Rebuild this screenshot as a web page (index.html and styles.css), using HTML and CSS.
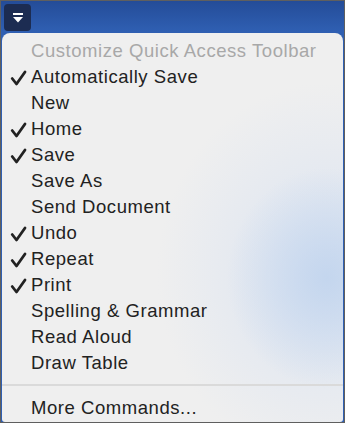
FILE: index.html
```html
<!DOCTYPE html>
<html lang="en">

<head>
    <meta charset="UTF-8">
    <meta name="viewport" content="width=device-width, initial-scale=1.0">
    <title>Quick Access Toolbar</title>
    <link rel="stylesheet" href="styles.css">
</head>

<body>
    <div class="window">
        <div class="toolbar">
            <div class="qat-button">
                <svg width="12" height="12" viewBox="0 0 12 12">
                    <rect x="1" y="1" width="10" height="2" fill="#fff" />
                    <polygon points="1,5 11,5 6,10.5" fill="#fff" />
                </svg>
            </div>
        </div>

        <div class="menu">
            <div class="menu-item header">Customize Quick Access Toolbar</div>
            <div class="menu-item checked">Automatically Save</div>
            <div class="menu-item">New</div>
            <div class="menu-item checked">Home</div>
            <div class="menu-item checked">Save</div>
            <div class="menu-item">Save As</div>
            <div class="menu-item">Send Document</div>
            <div class="menu-item checked">Undo</div>
            <div class="menu-item checked">Repeat</div>
            <div class="menu-item checked">Print</div>
            <div class="menu-item">Spelling &amp; Grammar</div>
            <div class="menu-item">Read Aloud</div>
            <div class="menu-item">Draw Table</div>
            <div class="separator"></div>
            <div class="menu-item">More Commands...</div>
        </div>
    </div>
</body>

</html>
```

FILE: styles.css
```css
body {
    margin: 0;
    font-family: 'Liberation Sans', Arial, sans-serif;
}

.window {
    width: 345px;
    height: 423px;
    box-sizing: border-box;
    border: 1px solid #5f5f5f;
    background: linear-gradient(to bottom, #244c98, #2f5fb2 30px);
    display: flex;
    flex-direction: column;
    overflow: hidden;
}

.toolbar {
    height: 32px;
    flex-shrink: 0;
    padding: 3px 0 0 3px;
    box-sizing: border-box;
}

.qat-button {
    width: 27px;
    height: 27px;
    border-radius: 4px;
    background: #1c2c52;
    display: flex;
    justify-content: center;
    align-items: center;
}

.menu {
    flex: 1;
    margin: 0 1px;
    padding-top: 5px;
    border-radius: 8px 8px 3px 3px;
    background:
        radial-gradient(ellipse 100px 110px at 325px 245px, rgba(196, 214, 238, 1), rgba(210, 222, 240, 0) 100%),
        radial-gradient(ellipse 170px 190px at 325px 240px, rgba(216, 226, 242, 0.9), rgba(239, 239, 239, 0) 100%),
        #efefef;
}

.menu-item {
    height: 26px;
    line-height: 26px;
    padding-left: 29px;
    font-size: 18.5px;
    letter-spacing: 0.55px;
    color: #222;
    position: relative;
    white-space: nowrap;
}

.menu-item.header {
    color: #a8a8a8;
}

.menu-item.checked::before {
    content: "";
    position: absolute;
    left: 8px;
    top: 6px;
    width: 17px;
    height: 16px;
    background: url("data:image/svg+xml;utf8,<svg xmlns='http://www.w3.org/2000/svg' width='17' height='16' viewBox='0 0 17 16'><polyline points='2.2,8.5 6.5,14 15,2' fill='none' stroke='%23222' stroke-width='2.8' stroke-linecap='round' stroke-linejoin='round'/></svg>") no-repeat;
}

.separator {
    height: 2px;
    background: #dadada;
    margin: 8px 0 9px;
}
```
